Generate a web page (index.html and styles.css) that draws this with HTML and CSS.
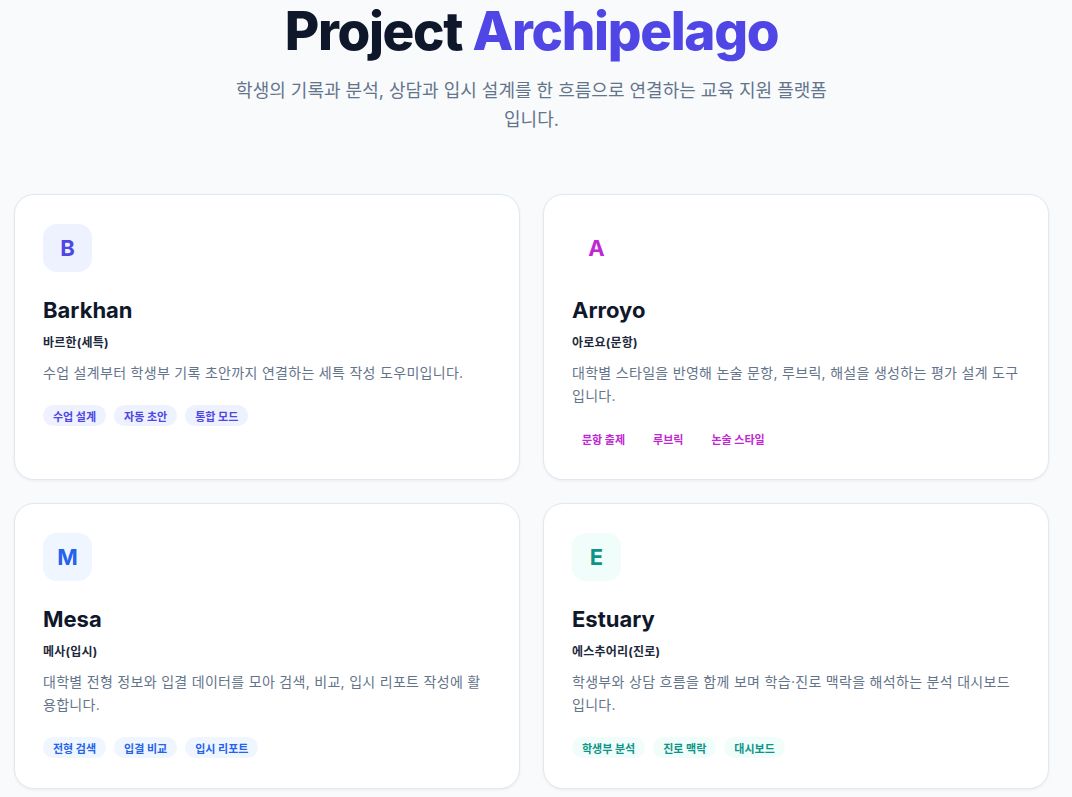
FILE: index.html
```html
<!DOCTYPE html>
<html lang="ko">
<head>
<meta charset="utf-8">
<title>Project Archipelago</title>
<link rel="stylesheet" href="styles.css">
</head>
<body>
<main class="page">
  <header class="hero">
    <h1 class="hero-title">Project <span class="accent">Archipelago</span></h1>
    <p class="hero-sub">학생의 기록과 분석, 상담과 입시 설계를 한 흐름으로 연결하는 교육 지원 플랫폼입니다.</p>
  </header>
  <section class="grid">
    <article class="card card-indigo">
      <div class="badge">B</div>
      <h2 class="card-title">Barkhan</h2>
      <p class="card-ko">바르한(세특)</p>
      <p class="card-desc">수업 설계부터 학생부 기록 초안까지 연결하는 세특 작성 도우미입니다.</p>
      <div class="tags"><span class="tag">수업 설계</span><span class="tag">자동 초안</span><span class="tag">통합 모드</span></div>
    </article>
    <article class="card card-fuchsia">
      <div class="badge">A</div>
      <h2 class="card-title">Arroyo</h2>
      <p class="card-ko">아로요(문항)</p>
      <p class="card-desc">대학별 스타일을 반영해 논술 문항, 루브릭, 해설을 생성하는 평가 설계 도구입니다.</p>
      <div class="tags"><span class="tag">문항 출제</span><span class="tag">루브릭</span><span class="tag">논술 스타일</span></div>
    </article>
    <article class="card card-blue">
      <div class="badge">M</div>
      <h2 class="card-title">Mesa</h2>
      <p class="card-ko">메사(입시)</p>
      <p class="card-desc">대학별 전형 정보와 입결 데이터를 모아 검색, 비교, 입시 리포트 작성에 활용합니다.</p>
      <div class="tags"><span class="tag">전형 검색</span><span class="tag">입결 비교</span><span class="tag">입시 리포트</span></div>
    </article>
    <article class="card card-teal">
      <div class="badge">E</div>
      <h2 class="card-title">Estuary</h2>
      <p class="card-ko">에스추어리(진로)</p>
      <p class="card-desc">학생부와 상담 흐름을 함께 보며 학습·진로 맥락을 해석하는 분석 대시보드입니다.</p>
      <div class="tags"><span class="tag">학생부 분석</span><span class="tag">진로 맥락</span><span class="tag">대시보드</span></div>
    </article>
  </section>
</main>
</body>
</html>
```
FILE: styles.css
```css
* { box-sizing: border-box; }
html, body { margin: 0; padding: 0; }
body {
  background: #f8fafc;
  font-family: Inter, "Noto Sans CJK KR", "Noto Sans", sans-serif;
  color: #0f172a;
}
.page {
  width: 1035px;
  margin-left: 14px;
  padding-bottom: 40px;
}
.hero {
  text-align: center;
  padding-top: 1px;
}
.hero-title {
  margin: 0;
  font-size: 53px;
  line-height: 60px;
  font-weight: 800;
  letter-spacing: -0.025em;
  color: #0f172a;
}
.accent { color: #4f46e5; }
.hero-sub {
  margin: 15px auto 0;
  max-width: 600px;
  font-size: 18px;
  line-height: 29px;
  color: #64748b;
}
.grid {
  margin-top: 60px;
  display: grid;
  grid-template-columns: 1fr 1fr;
  gap: 23px 23px;
}
.card {
  background: #ffffff;
  border: 1px solid #e2e8f0;
  border-radius: 20px;
  padding: 29px 28px 30px;
  box-shadow: 0 1px 3px rgba(15, 23, 42, 0.06);
  min-height: 283px;
}
.badge {
  width: 49px;
  height: 48px;
  border-radius: 14px;
  display: flex;
  align-items: center;
  justify-content: center;
  font-size: 22px;
  font-weight: 700;
}
.card-title {
  margin: 24px 0 0;
  font-size: 22px;
  line-height: 28px;
  font-weight: 700;
  color: #0f172a;
}
.card-ko {
  margin: 9px 0 0;
  font-size: 12px;
  line-height: 20px;
  font-weight: 700;
  color: #1e293b;
  letter-spacing: 0.2px;
}
.card-desc {
  margin: 8px 0 0;
  font-size: 14px;
  line-height: 23px;
  color: #64748b;
  letter-spacing: 0.3px;
}
.tags {
  margin-top: 21px;
  display: flex;
  gap: 8px;
}
.tag {
  display: inline-flex;
  align-items: center;
  height: 21px;
  padding: 0 10px;
  border-radius: 999px;
  font-size: 11px;
  font-weight: 700;
}
.card-indigo .badge { background: #eef2ff; color: #4f46e5; }
.card-indigo .tag { background: #eef2ff; color: #4f46e5; }
.card-fuchsia .badge { background: transparent; color: #c026d3; }
.card-fuchsia .tag { background: transparent; color: #c026d3; }
.card-blue .badge { background: #eff6ff; color: #2563eb; }
.card-blue .tag { background: #eff6ff; color: #2563eb; }
.card-teal .badge { background: #f0fdfa; color: #0d9488; }
.card-teal .tag { background: #f0fdfa; color: #0d9488; }
```
